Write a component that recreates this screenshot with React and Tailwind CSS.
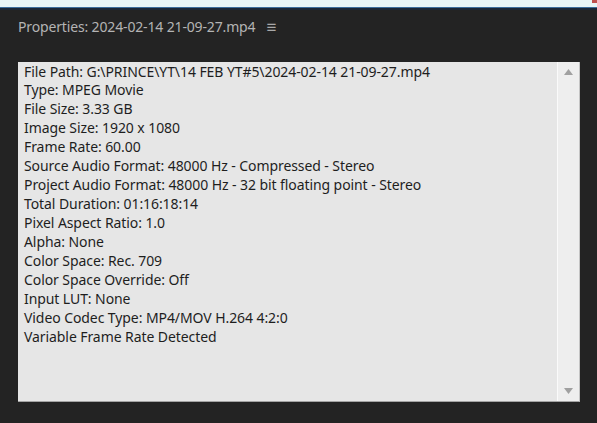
import React from "react";

const lines = [
	"File Path: G:\\PRINCE\\YT\\14 FEB YT#5\\2024-02-14 21-09-27.mp4",
	"Type: MPEG Movie",
	"File Size: 3.33 GB",
	"Image Size: 1920 x 1080",
	"Frame Rate: 60.00",
	"Source Audio Format: 48000 Hz - Compressed - Stereo",
	"Project Audio Format: 48000 Hz - 32 bit floating point - Stereo",
	"Total Duration: 01:16:18:14",
	"Pixel Aspect Ratio: 1.0",
	"Alpha: None",
	"Color Space: Rec. 709",
	"Color Space Override: Off",
	"Input LUT: None",
	"Video Codec Type: MP4/MOV H.264 4:2:0",
	"Variable Frame Rate Detected",
];

export default function App() {
	return (
		<div className="w-[597px] h-[423px] bg-[#232323] flex flex-col overflow-hidden" style={{ fontFamily: '"Noto Sans", "Open Sans", sans-serif' }}>
			{/* window edge above the panel */}
			<div className="h-[7px] bg-[#e9f5f6] flex justify-end">
				<div className="w-[5px] h-[3px] bg-[#c0504d]" />
			</div>
			<div className="h-px bg-[#3d6d9c]" />
			<div className="h-[2px] bg-[#1c2736]" />

			{/* panel header */}
			<div className="h-[32px] flex items-center pl-[18px] gap-[11px] text-[#b4b4b4] text-[14px]">
				<span className="tracking-[-0.15px]">Properties: 2024-02-14 21-09-27.mp4</span>
				<span className="text-[#a8a8a8] text-[17px] leading-none">≡</span>
			</div>

			{/* properties box */}
			<div className="mt-[20px] ml-[18px] w-[562px] h-[340px] flex bg-[#e6e6e6] border-b border-b-[#a3a3a3] border-r border-r-[#c4c4c4]">
				<div className="flex-1 pl-[6px] pt-[0.5px] text-[#1e1e1e] text-[14px] leading-[18.95px] tracking-[-0.08px]">
					{lines.map((l) => (
						<div key={l} className="whitespace-pre">{l}</div>
					))}
				</div>
				<div className="w-[22px] border-l border-l-[#fafafa] bg-[#eeeeee] flex flex-col justify-between items-center py-[7px]">
					<svg width="9" height="6" viewBox="0 0 9 6"><path d="M4.5 0 L9 6 L0 6 Z" fill="#a0a0a0" /></svg>
					<svg width="9" height="6" viewBox="0 0 9 6"><path d="M0 0 L9 0 L4.5 6 Z" fill="#a0a0a0" /></svg>
				</div>
			</div>
		</div>
	);
}
